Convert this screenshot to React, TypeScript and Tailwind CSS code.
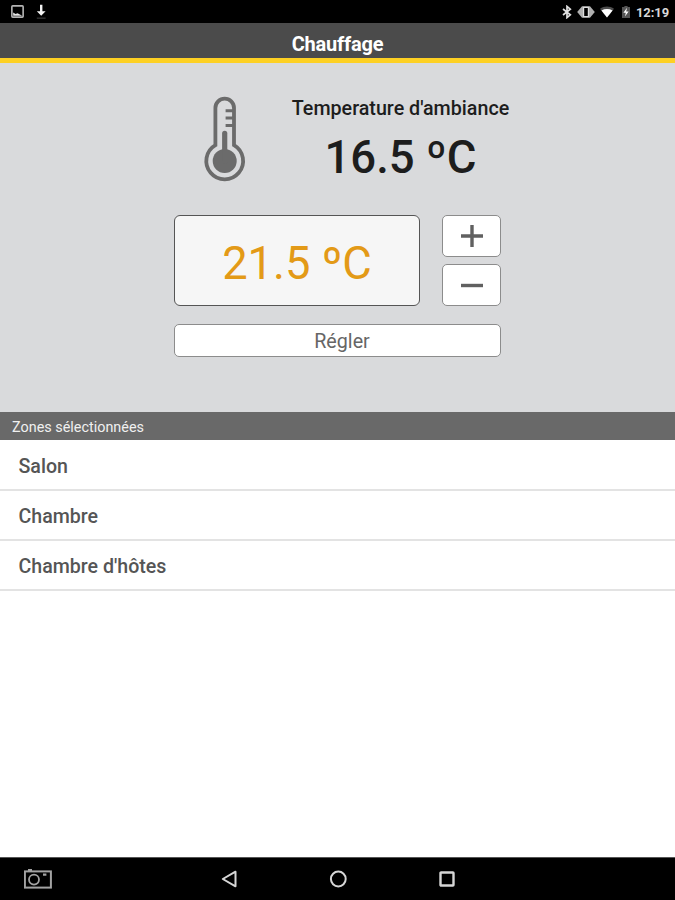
import React, { useState } from 'react';

const ZONES: string[] = ['Salon', 'Chambre', "Chambre d'hôtes"];

function StatusBar() {
  return (
    <div className="h-[23px] shrink-0 bg-black flex items-center justify-between pl-[11px] pr-[6px]">
      <div className="flex items-center gap-[11px]">
        <svg className="w-[13px] h-[13px]" viewBox="0 0 12 12" fill="none">
          <rect x="0.8" y="0.8" width="10.4" height="10.4" rx="0.8" stroke="#b4b4b4" strokeWidth="1.5" />
          <path d="M2 10V7L4.2 8.2L6 7.6L10 9.6V10Z" fill="#e8e8e8" />
        </svg>
        <svg className="w-3 h-4" viewBox="0 0 12 16">
          <path d="M5 0.8H7.4V7.2H10.6L6.2 11.8L1.8 7.2H5Z" fill="#f2f2f2" />
          <path d="M1.8 14.2H10.6" stroke="#2b2b2b" strokeWidth="1.6" />
        </svg>
      </div>
      <div className="flex items-center">
        <svg className="w-[10px] h-[14px] mr-[5px]" viewBox="0 0 10 14" fill="none" stroke="#e0e0e0" strokeWidth="1.7">
          <path d="M1 4L8.3 9.8L5 12.6V1.4L8.3 4.2L1 10" />
        </svg>
        <svg className="w-[18px] h-[14px] mr-[5px]" viewBox="0 0 18 14">
          <path d="M5 1.2H13L17.8 7L13 12.8H5L0.2 7Z" fill="#b0b0b0" />
          <rect x="6.6" y="2.4" width="4.8" height="9.2" fill="#000000" stroke="#dddddd" strokeWidth="1.2" />
        </svg>
        <svg className="w-[14px] h-3 mr-2" viewBox="0 0 14 12">
          <path d="M0 2.8C4 -0.4 10 -0.4 14 2.8L7 11.6Z" fill="#4c4c4c" />
          <path d="M1.4 4.4C4.8 2.6 9.2 2.6 12.6 4.4L7 11.6Z" fill="#ffffff" />
        </svg>
        <svg className="w-2 h-3 mr-[6px]" viewBox="0 0 8 12">
          <path d="M2.4 0H5.6V1H8V12H0V1H2.4Z" fill="#555555" />
          <path d="M5 1.8L1.4 6.8H3.8L3 10.4L6.6 5.4H4.2Z" fill="#ffffff" />
        </svg>
        <span className="text-[13px] leading-none font-bold text-[#d8d8d8] mt-[1px] tracking-[-0.1px]">12:19</span>
      </div>
    </div>
  );
}

function Thermometer() {
  return (
    <svg className="w-11 h-[90px] shrink-0" viewBox="0 0 44 90" fill="none" stroke="#6b6b6b">
      <path d="M12.4 50.1V12.9A9.3 9.3 0 0 1 31 12.9V50.1A18.4 18.4 0 1 1 12.4 50.1Z" strokeWidth="3.8" />
      <circle cx="21.7" cy="66" r="12" fill="#6b6b6b" stroke="none" />
      <path d="M21.7 66V38.4" strokeWidth="5.2" strokeLinecap="round" />
      <path d="M22.6 15.7H31M22.6 23.1H31M22.6 30.6H31" strokeWidth="3" />
    </svg>
  );
}

function NavBar() {
  return (
    <div className="h-[43px] shrink-0 bg-black border-t border-[#555555] flex items-center">
      <svg className="w-7 h-5 ml-[24px]" viewBox="0 0 28 20" fill="none" stroke="#a3a3a3">
        <rect x="0.9" y="2.4" width="26" height="16.2" strokeWidth="2" />
        <circle cx="10" cy="10.6" r="5" strokeWidth="1.8" />
        <path d="M4 1H8M19 5.6H22.4" strokeWidth="2.4" />
      </svg>
      <svg className="w-4 h-[18px] ml-[169px]" viewBox="0 0 16 18" fill="none">
        <path d="M14.5 1.7V16.3L1.8 9Z" stroke="#d6d6d6" strokeWidth="2" strokeLinejoin="round" />
      </svg>
      <svg className="w-[18px] h-[18px] ml-[92px]" viewBox="0 0 18 18" fill="none">
        <circle cx="9.3" cy="9" r="7.4" stroke="#d6d6d6" strokeWidth="2" />
      </svg>
      <svg className="w-4 h-4 ml-[92px]" viewBox="0 0 16 16" fill="none">
        <rect x="1.5" y="1.5" width="13" height="13" rx="0.6" stroke="#d6d6d6" strokeWidth="2.4" />
      </svg>
    </div>
  );
}

export default function App() {
  const [target, setTarget] = useState(21.5);

  return (
    <div className="w-[675px] h-[900px] flex flex-col bg-white overflow-hidden font-[Roboto,sans-serif]">
      <StatusBar />

      <header className="h-10 shrink-0 bg-[#4b4b4b] border-b-[5px] border-[#fdd023] flex items-center justify-center">
        <h1 className="text-[20px] leading-none font-bold text-white mt-[7px] tracking-[-0.2px]">Chauffage</h1>
      </header>

      {/* Heating controls */}
      <section className="h-[349px] shrink-0 bg-[#d9dadc] pl-[174px] pt-8">
        <div className="flex pl-[29px] h-[120px]">
          <Thermometer />
          <div className="ml-[44px] w-[219px] text-center text-[#1d1d1d]">
            <h2 className="text-[19.7px] leading-6 font-medium whitespace-nowrap mt-[2px]">Temperature d'ambiance</h2>
            <p className="text-[45.5px] leading-[54px] font-medium whitespace-nowrap mt-[10px]">16.5 ºC</p>
          </div>
        </div>

        <div className="flex gap-[22px]">
          <div className="w-[246px] h-[91px] rounded-md border-[1.5px] border-[#555555] bg-[#f6f6f6] flex items-center justify-center pt-[6px] text-[45.3px] text-[#e39a17]">
            {target.toFixed(1)} ºC
          </div>
          <div className="flex flex-col gap-[7px]">
            <button
              aria-label="Augmenter"
              onClick={() => setTarget(target + 0.5)}
              className="w-[59px] h-[42px] rounded-[5px] border border-[#8c8c8c] bg-white flex items-center justify-center"
            >
              <svg className="w-6 h-6" viewBox="0 0 24 24" stroke="#606060" strokeWidth="3.4">
                <path d="M1 12H23M12 1V23" />
              </svg>
            </button>
            <button
              aria-label="Diminuer"
              onClick={() => setTarget(target - 0.5)}
              className="w-[59px] h-[42px] rounded-[5px] border border-[#8c8c8c] bg-white flex items-center justify-center"
            >
              <svg className="w-6 h-6" viewBox="0 0 24 24" stroke="#606060" strokeWidth="3.4">
                <path d="M1 12.5H23" />
              </svg>
            </button>
          </div>
        </div>

        <button className="mt-[18px] w-[327px] h-[33px] rounded-[5px] border border-[#8c8c8c] bg-white pl-[9px] pt-[3px] text-[19.7px] leading-none text-[#666666] flex items-center justify-center">
          Régler
        </button>
      </section>

      {/* Selected zones */}
      <div className="h-7 shrink-0 bg-[#696969] pl-3 pt-[3px] flex items-center text-[14.4px] text-[#f0f0f0]">
        Zones sélectionnées
      </div>
      <ul className="flex-1 pt-[1px]">
        {ZONES.map((zone) => (
          <li
            key={zone}
            className="h-[50px] border-b-2 border-[#e3e3e3] pl-[18.5px] pt-[3px] flex items-center text-[19.6px] font-medium text-[#555555]"
          >
            {zone}
          </li>
        ))}
      </ul>

      <NavBar />
    </div>
  );
}
